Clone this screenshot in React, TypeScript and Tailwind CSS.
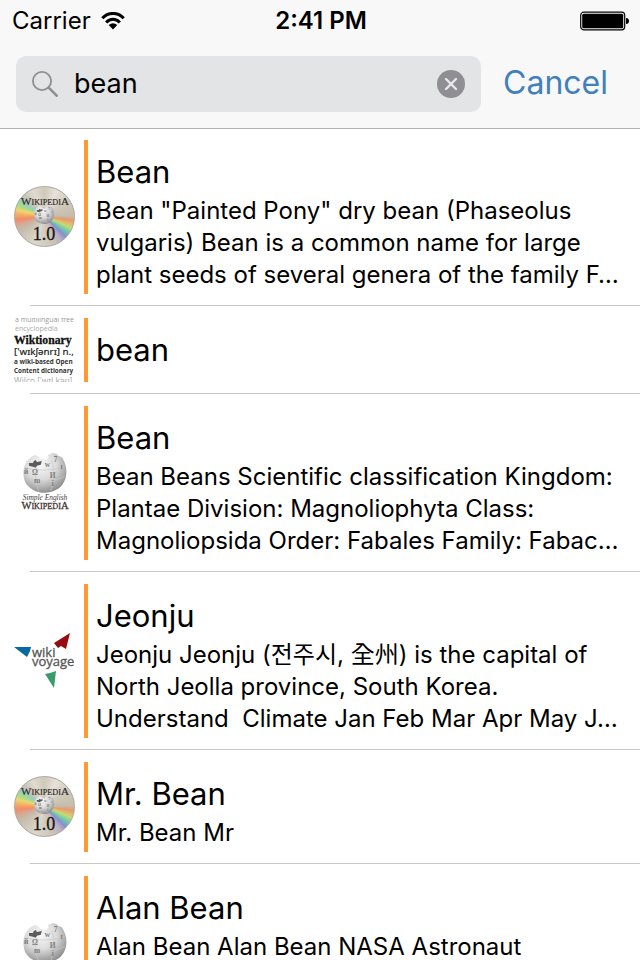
import { useState } from 'react';

type LogoKind = 'disc' | 'wiktionary' | 'simple' | 'voyage';

function Globe() {
  return (
    <g>
      <path d="M8 5 L12 3 L15 4 L18 7 L23 8 L26 5 L25 3 L30 1 L34 2 L36 4 L39 5 C47 16 45 32 34 38 C22 45 7 40 2 30 C-1 21 0 11 8 5 Z" fill="url(#globeShade)" />
      <path d="M6 11 L10 11 L11 9 L13 8 L14 10 L19 9 L18 13 L14 14 L13 16 L10 15 L6 14 Z" fill="#5c5c5c" />
      <path d="M2 16 Q22 21 42 15 M1 26 Q22 34 42 25 M14 16 Q10 30 16 39 M29 9 Q35 25 28 39" fill="none" stroke="#c8c8c8" strokeWidth="0.7" />
      <g fill="#7c7c7c" fontFamily="Liberation Serif, serif" fontWeight="bold" fontSize="7.5">
        <text x="22" y="15">w</text>
        <text x="9" y="23">Ω</text>
        <text x="27" y="26">И</text>
        <text x="11" y="31">m</text>
        <text x="29" y="34">ї</text>
        <text x="1" y="22">й</text>
        <text x="31" y="10">7</text>
        <text x="38" y="17">ı</text>
      </g>
    </g>
  );
}

function DiscLogo() {
  return (
    <div className="size-16 pt-px pl-[2px]">
      <div className="size-[61px] rounded-full border border-[#aaa8a3] bg-[conic-gradient(from_0deg,#cfc9ba_0deg,#e6e2d8_25deg,#d0cabc_55deg,#c6beac_88deg,#e29a72_98deg,#e6b866_105deg,#bfdc78_113deg,#74cfa8_122deg,#8590d0_134deg,#c0aec4_145deg,#ccc5b6_162deg,#dcd7cb_200deg,#c4bcaa_240deg,#d8a894_252deg,#f28c6c_264deg,#f6ac62_274deg,#ecd672_284deg,#a6dc84_294deg,#98cdc4_304deg,#c9c3b6_316deg,#e0dbd0_335deg,#cfc9ba_360deg)]">
        <svg viewBox="3 3 60 60" className="-mt-px -ml-px size-[60px] overflow-visible" role="img" aria-label="Wikipedia 1.0">
          <g transform="translate(23 22) scale(0.46)"><Globe /></g>
          <text x="34" y="22" textAnchor="middle" fontFamily="Liberation Serif, serif" fontSize="11" fill="#302c28" stroke="#302c28" strokeWidth="0.2">
            W<tspan fontSize="8.2">IKIPEDI</tspan>A
          </text>
          <text x="33" y="57" textAnchor="middle" fontFamily="Liberation Serif, serif" fontSize="18" fill="#171512" stroke="#171512" strokeWidth="0.3">1.0</text>
        </svg>
      </div>
    </div>
  );
}

function WiktionaryLogo() {
  return (
    <svg viewBox="0 0 64 64" className="size-16" role="img" aria-label="Wiktionary">
      <g fontFamily="Open Sans, sans-serif" fontSize="7">
        <text x="3" y="4" fill="#999">a multilingual free</text>
        <text x="3" y="13" fill="#aaa">encyclopedia</text>
        <text x="2" y="26" fontFamily="Liberation Serif, serif" fontWeight="bold" fontSize="11.7" fill="#111" stroke="#111" strokeWidth="0.3">Wiktionary</text>
        <text x="2" y="37" fontFamily="Noto Sans, sans-serif" fontSize="9.8" fill="#222" stroke="#222" strokeWidth="0.2">['wɪkʃənrɪ] n.,</text>
        <text x="2" y="46" fontSize="6.4" fontWeight="bold" fill="#333">a wiki-based Open</text>
        <text x="2" y="55" fontSize="6.3" fontWeight="bold" fill="#333">Content dictionary</text>
        <text x="2" y="66" fontSize="8.4" fill="#aaa">Wilco ['wɪl kəʊ]</text>
      </g>
    </svg>
  );
}

function SimpleLogo() {
  return (
    <svg viewBox="0 0 64 64" className="size-16" role="img" aria-label="Simple English Wikipedia">
      <g transform="translate(11 1) scale(0.99)"><Globe /></g>
      <text x="33" y="49" textAnchor="middle" fontFamily="Liberation Serif, serif" fontStyle="italic" fontSize="7.4" fill="#443c3c">Simple English</text>
      <text x="33" y="58" textAnchor="middle" fontFamily="Liberation Serif, serif" fontSize="10.5" fill="#453632" stroke="#453632" strokeWidth="0.3">
        W<tspan fontSize="8.2">IKIPEDI</tspan>A
      </text>
    </svg>
  );
}

function VoyageLogo() {
  return (
    <svg viewBox="0 0 64 64" className="size-16" role="img" aria-label="Wikivoyage">
      <path d="M2 18 L19 18 L18 22 L15 28 Z" fill="#0868a2" />
      <path d="M58 4 L42 14 L46 19 L49 17 L54 20 Z" fill="#970b10" />
      <path d="M33 45 L38 44 L44 42 L42 59 Z" fill="#379b6b" />
      <g fontFamily="Open Sans, sans-serif" fontSize="13" fill="#555" stroke="#555" strokeWidth="0.3">
        <text x="20" y="28">wiki</text>
        <text x="20" y="37">voyage</text>
      </g>
    </svg>
  );
}

const logos: Record<LogoKind, () => React.JSX.Element> = {
  disc: DiscLogo,
  wiktionary: WiktionaryLogo,
  simple: SimpleLogo,
  voyage: VoyageLogo,
};

const results: { logo: LogoKind; title: string; body?: string; tall?: boolean }[] = [
  { logo: 'disc', title: 'Bean', body: 'Bean "Painted Pony" dry bean (Phaseolus vulgaris) Bean is a common name for large plant seeds of several genera of the family F…' },
  { logo: 'wiktionary', title: 'bean' },
  { logo: 'simple', title: 'Bean', body: 'Bean Beans Scientific classification Kingdom: Plantae Division: Magnoliophyta Class: Magnoliopsida Order: Fabales Family: Fabac…' },
  { logo: 'voyage', title: 'Jeonju', body: 'Jeonju Jeonju (전주시, 全州) is the capital of North Jeolla province, South Korea. Understand  Climate Jan Feb Mar Apr May J…' },
  { logo: 'disc', title: 'Mr. Bean', body: 'Mr. Bean Mr' },
  { logo: 'simple', title: 'Alan Bean', body: 'Alan Bean Alan Bean NASA Astronaut', tall: true },
];

export default function App() {
  const [query, setQuery] = useState('bean');
  return (
    <div className="h-screen overflow-hidden bg-white font-['Inter','Noto_Sans_CJK_KR',sans-serif] text-black">
      <svg className="absolute size-0" aria-hidden="true">
        <defs>
          <radialGradient id="globeShade" cx="0.4" cy="0.3" r="0.75">
            <stop offset="0" stopColor="#f8f8f8" />
            <stop offset="0.5" stopColor="#dadada" />
            <stop offset="1" stopColor="#858585" />
          </radialGradient>
        </defs>
      </svg>
      <header className="relative z-10 bg-[#f8f8f8] pb-4 shadow-[0_1px_0_#b2b2b2]">
        <div className="grid h-[42px] grid-cols-3 items-center pr-[10px] pl-3 text-2xl">
          <div className="flex items-center gap-[10px]">
            <span>Carrier</span>
            <svg viewBox="0 0 24 18" className="h-[18px] w-6" aria-label="Wi-Fi">
              <path d="M1.3 6.3 C7 -0.2 17 -0.2 22.7 6.3" fill="none" stroke="#000" strokeWidth="3" />
              <path d="M5.2 10.4 C9 6.2 15 6.2 18.8 10.4" fill="none" stroke="#000" strokeWidth="3" />
              <path d="M7.7 13 Q12 9.5 16.3 13 L12 17.5 Z" />
            </svg>
          </div>
          <div className="text-center font-semibold whitespace-nowrap">2:41 PM</div>
          <svg viewBox="0 0 50 20" className="h-5 w-[50px] justify-self-end" aria-label="Battery full">
            <rect x="0.7" y="1.2" width="44" height="17.6" rx="3" fill="none" stroke="#000" strokeWidth="1.2" />
            <rect x="2.2" y="2.7" width="41" height="14.6" rx="1.5" />
            <path d="M46 7 Q49 7 49 10 Q49 13 46 13 Z" />
          </svg>
        </div>
        <form className="flex items-center pt-[14px] pr-8 pl-4" onSubmit={(e) => e.preventDefault()}>
          <div className="flex h-14 min-w-0 flex-1 items-center rounded-[10px] bg-[#e2e4e6] pr-4 pl-4">
            <svg viewBox="0 0 26 26" className="size-[26px] shrink-0" fill="none" stroke="#8e8e93" aria-hidden="true">
              <circle cx="10" cy="10" r="9.1" strokeWidth="1.8" />
              <path d="M16.7 16.7 L24.7 24.7" strokeWidth="2.6" strokeLinecap="round" />
            </svg>
            <input
              aria-label="Search"
              value={query}
              onChange={(e) => setQuery(e.target.value)}
              className="ml-4 min-w-0 flex-1 bg-transparent text-[27px] outline-none"
            />
            <button type="button" aria-label="Clear" onClick={() => setQuery('')}>
              <svg viewBox="0 0 28 28" className="size-7">
                <circle cx="14" cy="14" r="14" fill="#8e8e93" />
                <path d="M9 9 L19 19 M19 9 L9 19" stroke="#e8e9eb" strokeWidth="2.4" strokeLinecap="round" />
              </svg>
            </button>
          </div>
          <button type="button" className="ml-[22px] pb-[2px] text-[32px] leading-[52px] text-[#427fbd]">Cancel</button>
        </form>
      </header>
      <ul>
        {results.map((r, i) => {
          const Logo = logos[r.logo];
          return (
            <li key={i}>
              <div className="flex pt-3 pr-5 pb-[11px] pl-3">
                <div className="flex w-16 shrink-0 items-center"><Logo /></div>
                <div className={r.tall ? 'ml-2 min-h-[154px] w-1 shrink-0 bg-[#ff9933]' : 'ml-2 min-h-16 w-1 shrink-0 bg-[#ff9933]'} />
                <div className={r.body ? 'min-w-0 flex-1 pt-3 pb-[3px] pl-2' : 'min-w-0 flex-1 self-center pl-2'}>
                  <h2 className="text-[31px] leading-10">{r.title}</h2>
                  {r.body && <p className="mt-[3px] text-2xl leading-8 whitespace-pre-wrap">{r.body}</p>}
                </div>
              </div>
              <div className="ml-[30px] h-px bg-[#c8c7cc]" />
            </li>
          );
        })}
      </ul>
    </div>
  );
}
